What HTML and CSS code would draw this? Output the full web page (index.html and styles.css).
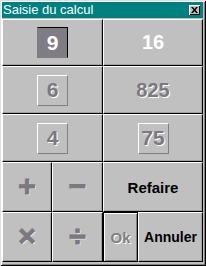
FILE: index.html
```html
<!DOCTYPE html>
<html lang="fr">
<head>
    <meta charset="UTF-8">
    <title>Saisie du calcul</title>
    <link rel="stylesheet" href="styles.css">
</head>
<body>
    <div class="window">
        <div class="titlebar">
            <span class="title">Saisie du calcul</span>
            <span class="closebtn">
                <svg width="7" height="6" viewBox="0 0 7 6"><path d="M0 0h2l1.5 2 1.5-2h2l-2.5 3 2.5 3h-2l-1.5-2-1.5 2h-2l2.5-3z" fill="#000"/></svg>
            </span>
        </div>
        <div class="grid">
            <div class="cell wide"><span class="tile picked">9</span></div>
            <div class="cell wide"><span class="num used">16</span></div>

            <div class="cell wide"><span class="tile">6</span></div>
            <div class="cell wide"><span class="num">825</span></div>

            <div class="cell wide"><span class="tile">4</span></div>
            <div class="cell wide"><span class="tile">75</span></div>

            <div class="cell op">+</div>
            <div class="cell op">&minus;</div>
            <div class="cell wide label">Refaire</div>

            <div class="cell op">&times;</div>
            <div class="cell op">&divide;</div>
            <div class="cell okbtn">Ok</div>
            <div class="cell label small">Annuler</div>
        </div>
    </div>
</body>
</html>
```

FILE: styles.css
```css
body {
    margin: 0;
    background-color: #c0c0c0;
}

.window {
    width: 206px;
    height: 266px;
    box-sizing: border-box;
    padding: 2px 3px 4px 2px;
    background-color: #c0c0c0;
    box-shadow: inset 1px 1px #dfdfdf, inset -1px -1px #000, inset 2px 2px #fff, inset -2px -2px #808080;
}

.titlebar {
    height: 16px;
    margin-bottom: 1px;
    background-color: #008080;
    display: flex;
    align-items: center;
    justify-content: space-between;
    padding: 0 3px 0 1px;
}
.title {
    color: #fff;
    font-family: "Liberation Sans", Arial, sans-serif;
    font-size: 13px;
    line-height: 16px;
}
.closebtn {
    width: 11px;
    height: 10px;
    box-sizing: border-box;
    background-color: #c0c0c0;
    box-shadow: inset 1px 1px #fff, inset -1px -1px #000;
    display: flex;
    justify-content: center;
    align-items: center;
}

.grid {
    display: grid;
    grid-template-columns: 50px 51px 35px 65px;
    grid-template-rows: 47px 48px 48px 50px 50px;
}

.cell {
    box-sizing: border-box;
    border: 1px solid;
    border-color: #fff #000 #000 #fff;
    box-shadow: inset -1px -1px #a0a0a0;
    display: flex;
    justify-content: center;
    align-items: center;
    font-family: "Liberation Sans", Arial, sans-serif;
    font-weight: bold;
}
.wide {
    grid-column: span 2;
}

.tile {
    min-width: 31px;
    height: 31px;
    box-sizing: border-box;
    border: 1px solid;
    border-color: #fff #808080 #808080 #fff;
    display: flex;
    justify-content: center;
    align-items: center;
    font-size: 21px;
    color: #7c7880;
    text-shadow: 1px 1px #fff;
}
.tile.picked {
    background-color: #807c84;
    border-color: #000 #000 #807c84 #807c84;
    color: #fff;
    text-shadow: none;
}

.num {
    font-size: 20px;
    color: #7c7880;
    text-shadow: 1px 1px #fff;
}
.num.used {
    color: #fff;
    text-shadow: none;
}

.op {
    font-size: 30px;
    color: #7c7880;
    -webkit-text-stroke: 1px #7c7880;
    text-shadow: 1px 1px #fff;
    padding-bottom: 2px;
}

.label {
    font-size: 15px;
    color: #000;
}
.label.small {
    font-size: 14px;
}

.okbtn {
    border-color: #000;
    box-shadow: inset 1px 1px #fff, inset -1px -1px #808080;
    font-size: 15px;
    color: #808080;
    text-shadow: 1px 1px #fff;
}
```
